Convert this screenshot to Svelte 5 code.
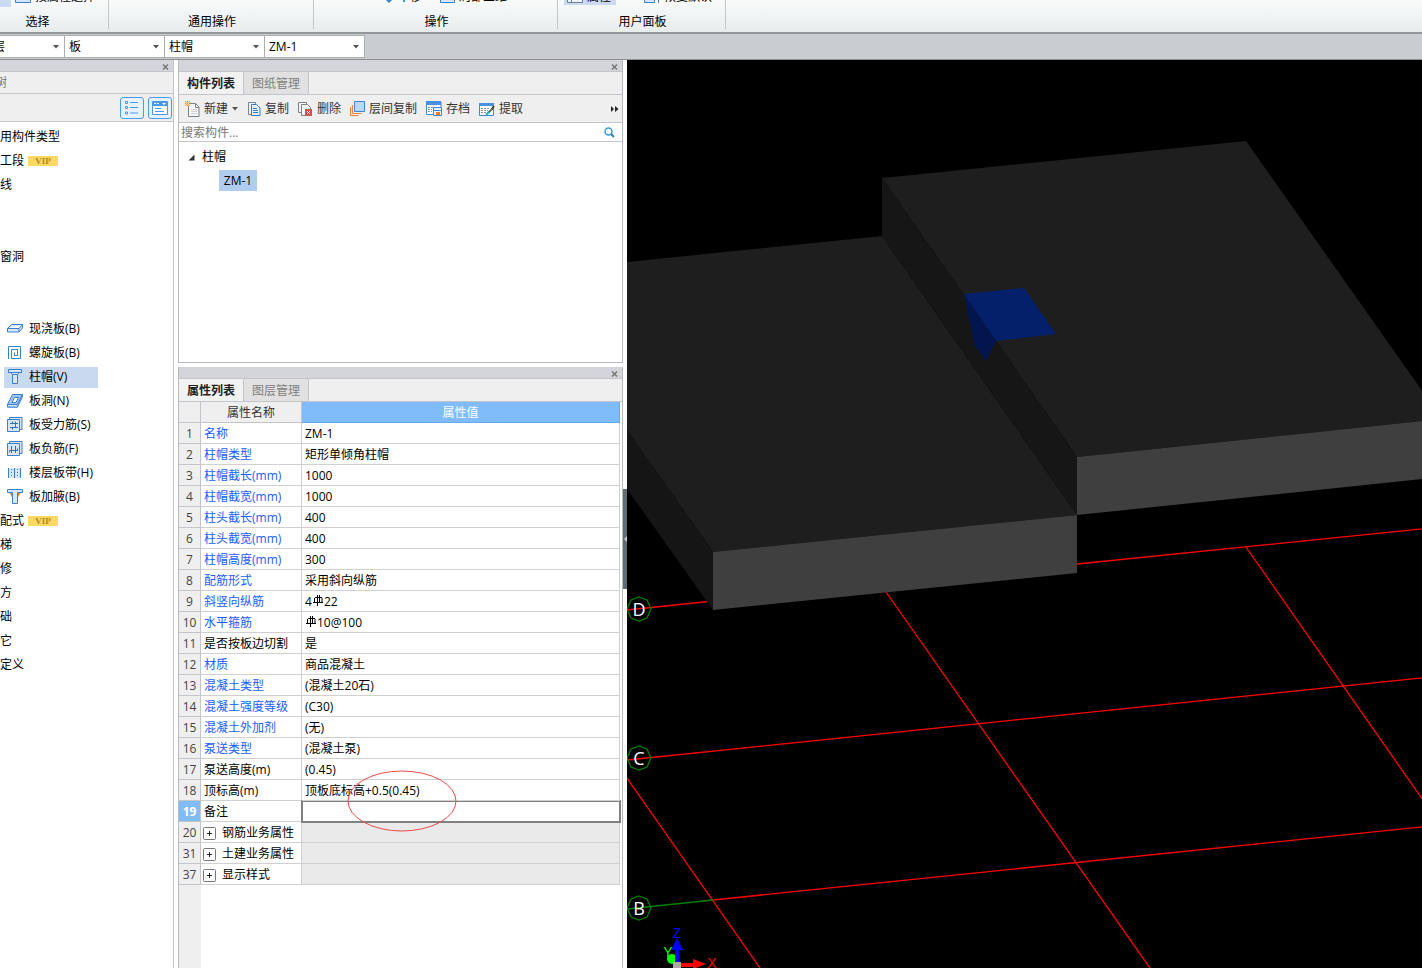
<script>
  // categories above and below the open slab group, null is a row scrolled out to the left
  const navTop = [
    { label: '用构件类型' },
    { label: '工段', vip: true },
    { label: '线' },
    null,
    null,
    { label: '窗洞' },
    null,
    null,
  ]

  const slabItems = [
    { icon: 'slab', label: '现浇板(B)' },
    { icon: 'spiral', label: '螺旋板(B)' },
    { icon: 'cap', label: '柱帽(V)' },
    { icon: 'hole', label: '板洞(N)' },
    { icon: 'rebar', label: '板受力筋(S)' },
    { icon: 'negative', label: '板负筋(F)' },
    { icon: 'strip', label: '楼层板带(H)' },
    { icon: 'haunch', label: '板加腋(B)' },
  ]

  const navBottom = [
    { label: '配式', vip: true },
    { label: '梯' },
    { label: '修' },
    { label: '方' },
    { label: '础' },
    { label: '它' },
    { label: '定义' },
  ]

  const combos = [
    { name: '楼层', value: '基础层' },
    { name: '构件大类', value: '板' },
    { name: '构件类型', value: '柱帽' },
    { name: '构件', value: 'ZM-1' },
  ]

  const properties = [
    { no: 1, name: '名称', value: 'ZM-1', link: true },
    { no: 2, name: '柱帽类型', value: '矩形单倾角柱帽', link: true },
    { no: 3, name: '柱帽截长(mm)', value: '1000', link: true },
    { no: 4, name: '柱帽截宽(mm)', value: '1000', link: true },
    { no: 5, name: '柱头截长(mm)', value: '400', link: true },
    { no: 6, name: '柱头截宽(mm)', value: '400', link: true },
    { no: 7, name: '柱帽高度(mm)', value: '300', link: true },
    { no: 8, name: '配筋形式', value: '采用斜向纵筋', link: true },
    { no: 9, name: '斜竖向纵筋', before: '4', value: '22', bar: true, link: true },
    { no: 10, name: '水平箍筋', before: '', value: '10@100', bar: true, link: true },
    { no: 11, name: '是否按板边切割', value: '是' },
    { no: 12, name: '材质', value: '商品混凝土', link: true },
    { no: 13, name: '混凝土类型', value: '(混凝土20石)', link: true },
    { no: 14, name: '混凝土强度等级', value: '(C30)', link: true },
    { no: 15, name: '混凝土外加剂', value: '(无)', link: true },
    { no: 16, name: '泵送类型', value: '(混凝土泵)', link: true },
    { no: 17, name: '泵送高度(m)', value: '(0.45)' },
    { no: 18, name: '顶标高(m)', value: '顶板底标高+0.5(0.45)', marked: true },
  ]

  const groups = [
    { no: 20, name: '钢筋业务属性' },
    { no: 31, name: '土建业务属性' },
    { no: 37, name: '显示样式' },
  ]

  const bubbles = [
    { label: 'D', y: 609 },
    { label: 'C', y: 758 },
    { label: 'B', y: 908 },
  ]

  let selected = $state('柱帽(V)')
  let remark = $state('')
  let keyword = $state('')
</script>

{#snippet closeIcon()}
  <svg width="7" height="6" viewBox="0 0 7 6"><path d="M1 .5 6 5.500M6 .5 1 5.500" stroke="#777" stroke-width="1.500" /></svg>
{/snippet}

{#snippet navRow(item)}
  <li class="nav-row">
    {#if item}{item.label}{/if}
    {#if item?.vip}<span class="vip">VIP</span>{/if}
  </li>
{/snippet}

{#snippet navIcon(name)}
  <svg width="16" height="16" viewBox="0 0 16 16" fill="#d5e6f8" stroke="#3c80cc">
    {#if name === 'slab'}
      <path d="M.5 7.500 4.500 3.500h11v3.500l-3.500 4H.5zM.5 7.500h11.500l3.500-4M12 7.500V11" />
    {:else if name === 'spiral'}
      <path d="M1.500 14V1.500h12v12h-9v-9h6v6h-3v-3" fill="none" />
    {:else if name === 'cap'}
      <path d="M1.500.5h13v3h-2l-2 2v9h-5v-9l-2-2h-2zM1.500 3.500h13M5.500 5.500h5" />
    {:else if name === 'hole'}
      <path d="M5.500 1.500h10l-5 10v2.500H.5v-2.500z" fill="#9fc3ec" />
      <path d="M.5 11.500h10v2.500H.5z" />
      <path d="M10.500 11.500l5-10v2l-5 10.500" />
      <path d="M7.500 4.500h4l-2.500 5H5z" fill="#fff" />
    {:else if name === 'rebar'}
      <path d="M2.500 3V.5h12.500v12h-2" />
      <path d="M.5 2.500h12v12H.5z" />
      <path d="M3 6.500h8M3 10.500h8M5.500 4.500v2M8.500 4.500v4M5.500 10.500v2M8.500 8.500v2" stroke="#2f6db5" />
    {:else if name === 'negative'}
      <path d="M2.500 3V.5h12.500v12h-2" />
      <path d="M.5 2.500h12v12H.5z" />
      <path d="M4.500 5v7M8.500 5v7M2.500 9.500h8M2.500 9.500v2M10.500 7.500v2" stroke="#2f6db5" />
    {:else if name === 'strip'}
      <path d="M1 3h13v10H1z" stroke="none" />
      <path d="M1.500 3v10M13.500 3v10M7.500 3v10" fill="none" />
      <path d="M4.500 4v9M10.500 4v9" stroke-dasharray="1 2" fill="none" />
    {:else}
      <path d="M2 3h12l-4 7H6z" fill="#f5821f" stroke="none" />
      <path d="M.5.5h15v3h-5v11h-5v-11h-5z" />
    {/if}
  </svg>
{/snippet}

{#snippet rebarMark()}
  <svg class="rebar-mark" width="10" height="11" viewBox="0 0 10 11" fill="none" stroke="#000">
    <path d="M4.500 0v11M6.500 0v7M2 2.500h7M0 7.500h10M1.500 3v4M9 3v4" />
  </svg>
{/snippet}

<div class="app">
  <header class="ribbon">
    <section class="group select-group">
      <div class="cut">
        <span class="active-tool"></span>
        <svg width="16" height="16" viewBox="0 0 16 16"><path d="M.5 2.500h15v13H.5z" fill="#d5e6f8" stroke="#3c80cc" /></svg>
        <span>按属性选择</span>
      </div>
      <h2>选择</h2>
    </section>
    <section class="group common-group">
      <div class="cut"></div>
      <h2>通用操作</h2>
    </section>
    <section class="group action-group">
      <div class="cut">
        <svg width="10" height="16" viewBox="0 0 10 16"><path d="M5 16 0 11h10z" fill="#3c80cc" /></svg>
        <span>平移</span>
        <svg class="view-icon" width="15" height="16" viewBox="0 0 15 16"><path d="M.5 2.500h14v13H.5z" fill="#d5e6f8" stroke="#3c80cc" /></svg>
        <span>局部三维</span>
      </div>
      <h2>操作</h2>
    </section>
    <section class="group user-group">
      <div class="cut">
        <span class="active-tool wide">
          <svg width="16" height="16" viewBox="0 0 16 16"><path d="M.5 2.500h15v13H.5zM4.500 3v12" fill="#eef3f8" stroke="#708090" /></svg>
          <span>属性</span>
        </span>
        <svg class="reset-icon" width="16" height="16" viewBox="0 0 16 16"><path d="M.5 2.500h10v13H.5zM14.500 4v12" fill="#d5e6f8" stroke="#3c80cc" /></svg>
        <span>恢复默认</span>
      </div>
      <h2>用户面板</h2>
    </section>
  </header>

  <div class="combo-bar">
    {#each combos as combo (combo.name)}
      <label class="combo">
        <select aria-label={combo.name}>
          <option>{combo.value}</option>
        </select>
        <svg width="6" height="4" viewBox="0 0 6 4"><path d="M0 0h6L3 3.500z" fill="#555" /></svg>
      </label>
    {/each}
  </div>

  <main class="workspace">
    <nav class="nav-panel">
      <div class="strip">
        <button aria-label="关闭导航树">{@render closeIcon()}</button>
      </div>
      <h3>树</h3>
      <div class="nav-tools">
        <button aria-label="列表视图">
          <svg width="14" height="14" viewBox="0 0 14 14" fill="none" stroke="#4a98e8">
            <path d="M.5.5h2v2h-2zM.5 5.500h2v2h-2zM.5 11h2v2h-2zM5 1.500h8M5 6.500h8M5 12h8" />
          </svg>
        </button>
        <button aria-label="面板视图">
          <svg width="16" height="14" viewBox="0 0 16 14">
            <path d="M.5.5h15v13H.5z" fill="#fff" stroke="#4a98e8" />
            <path d="M1 1h14v4H1z" fill="#4a98e8" />
            <path d="M2 2.500h2M5 2.500h2" stroke="#fff" />
            <path d="M10 2h4l-2 2z" fill="#fff" />
            <path d="M3 7.500h6M3 10.500h9" stroke="#4a98e8" />
          </svg>
        </button>
      </div>
      <ul class="nav-tree">
        {#each navTop as item}
          {@render navRow(item)}
        {/each}
        {#each slabItems as item (item.label)}
          <li class="nav-row">
            <button
              class="nav-item"
              class:selected={selected === item.label}
              onclick={() => (selected = item.label)}
            >
              {@render navIcon(item.icon)}
              <span>{item.label}</span>
            </button>
          </li>
        {/each}
        {#each navBottom as item}
          {@render navRow(item)}
        {/each}
      </ul>
    </nav>

    <div class="middle">
      <section class="panel">
        <div class="strip">
          <button aria-label="关闭构件列表">{@render closeIcon()}</button>
        </div>
        <div class="tabs">
          <button class="tab active">构件列表</button>
          <button class="tab">图纸管理</button>
        </div>
        <div class="tools">
          <button class="new">
            <svg width="15" height="16" viewBox="0 0 15 16">
              <path d="M3.500 2.500h7l3.500 3.500v9.500H3.500z" fill="#f7f7f7" stroke="#7d8288" />
              <path d="M10.500 2.500v4h3.500" fill="none" stroke="#7d8288" />
              <path d="M6 8.500h6M6 10.500h6M6 12.500h6" stroke="#d0d3d6" />
              <path d="M0 0h5v5H0z" fill="#f9d9a8" />
              <path d="M0 0l5 5M5 0 0 5M2.500 0v5M0 2.500h5" stroke="#f0922b" stroke-dasharray="1 1" />
            </svg>
            新建
            <svg width="6" height="4" viewBox="0 0 6 4"><path d="M0 0h6L3 3.500z" fill="#555" /></svg>
          </button>
          <button>
            <svg width="13" height="16" viewBox="0 0 13 16" fill="#eaf2fb">
              <path d="M3 13.500H.5v-12h7V4" stroke="#7d8288" />
              <path d="M3.500 3.500h5l3.500 3.500v7.500H3.500z" stroke="#2f7ad0" />
              <path d="M5 7.500h4M5 9.500h5M5 11.500h5" stroke="#2f7ad0" />
            </svg>
            复制
          </button>
          <button>
            <svg width="15" height="16" viewBox="0 0 15 16" fill="#f5f5f5">
              <path d="M3 11.500H.5v-10h8V4" stroke="#7d8288" />
              <path d="M3.500 14.500v-11h6l3 3v8z" stroke="#7d8288" />
              <path d="M7 8h7v7H7z" fill="#d94f4f" />
              <path d="M9 10l3 3M12 10l-3 3" stroke="#fff" />
            </svg>
            删除
          </button>
          <button>
            <svg width="15" height="16" viewBox="0 0 15 16" fill="none">
              <path d="M.5 6v8.500h8M2.500 4v8.500h9" stroke="#e8843a" />
              <path d="M4.500.5h10v10h-10z" fill="#b9d8fb" stroke="#3f86d8" />
            </svg>
            层间复制
          </button>
          <button>
            <svg width="16" height="16" viewBox="0 0 16 16" fill="none">
              <path d="M.5 1v12.500H15V1z" fill="#fff" stroke="#3f86d8" />
              <path d="M0 0h15v4H0z" fill="#4a90e2" />
              <path d="M2 6.500h11M2 8.500h4M2 10.500h4" stroke="#8a8f95" stroke-dasharray="2 1" />
              <path d="M7.500 6.500h8v8h-8z" fill="#eaf2fb" stroke="#3f86d8" />
              <path d="M8 9.500h7" stroke="#3f86d8" />
              <path d="M10 11h4v3h-4z" fill="#f27b1f" />
            </svg>
            存档
          </button>
          <button>
            <svg width="16" height="16" viewBox="0 0 16 16" fill="none">
              <path d="M.5 3v11.500h14V3z" fill="#fff" stroke="#3f86d8" />
              <path d="M0 2h15v3H0z" fill="#4a90e2" />
              <path d="M2 7.500h8M2 9.500h7M2 11.500h5" stroke="#8a8f95" stroke-dasharray="2 1" />
              <path d="M9 12l5-5" stroke="#666" stroke-width="2" />
              <path d="M13 8l2-3" stroke="#444" stroke-width="2" />
              <path d="M7 14l3-3" stroke="#20b4c8" stroke-width="2" />
            </svg>
            提取
          </button>
          <button class="more" aria-label="更多">
            <svg width="8" height="6" viewBox="0 0 8 6"><path d="M0 0v6l3-3zM4 0v6l3.500-3z" fill="#222" /></svg>
          </button>
        </div>
        <label class="search">
          <input type="text" placeholder="搜索构件..." aria-label="搜索构件" bind:value={keyword} />
          <svg width="11" height="11" viewBox="0 0 11 11" fill="none">
            <circle cx="4.500" cy="4.500" r="3.500" stroke="#3a9bd0" stroke-width="1.500" />
            <path d="M7 7l3 3" stroke="#2b7fb5" stroke-width="2" />
          </svg>
        </label>
        <div class="component-tree">
          <div class="tree-root">
            <svg width="7" height="7" viewBox="0 0 7 7"><path d="M6.500.5v6h-6z" fill="#333" /></svg>
            柱帽
          </div>
          <button class="tree-leaf">ZM-1</button>
        </div>
      </section>

      <section class="panel properties">
        <div class="strip">
          <button aria-label="关闭属性列表">{@render closeIcon()}</button>
        </div>
        <div class="tabs">
          <button class="tab active">属性列表</button>
          <button class="tab">图层管理</button>
        </div>
        <div class="table-wrap">
          <table>
            <thead>
              <tr>
                <th class="no"></th>
                <th class="name">属性名称</th>
                <th class="value">属性值</th>
              </tr>
            </thead>
            <tbody>
              {#each properties as row (row.no)}
                <tr>
                  <th class="no">{row.no}</th>
                  <td class:link={row.link}>{row.name}</td>
                  <td class:marked={row.marked}>
                    {#if row.bar}{row.before}{@render rebarMark()}{/if}{row.value}
                    {#if row.marked}
                      <svg class="ring" width="110" height="62" viewBox="0 0 110 62">
                        <ellipse cx="55" cy="31" rx="54" ry="30" fill="none" stroke="#f04848" />
                      </svg>
                    {/if}
                  </td>
                </tr>
              {/each}
              <tr>
                <th class="no current">19</th>
                <td><label for="remark">备注</label></td>
                <td class="editing"><input id="remark" type="text" bind:value={remark} /></td>
              </tr>
              {#each groups as group (group.no)}
                <tr>
                  <th class="no">{group.no}</th>
                  <td class="group-name">
                    <button class="expand">
                      <svg width="13" height="13" viewBox="0 0 13 13" fill="none">
                        <rect x=".5" y=".5" width="12" height="12" rx="1" stroke="#777" fill="#fff" />
                        <path d="M4 6.500h5M6.500 4v5" stroke="#222" />
                      </svg>
                      {group.name}
                    </button>
                  </td>
                  <td class="empty"></td>
                </tr>
              {/each}
            </tbody>
          </table>
        </div>
      </section>
    </div>

    <div class="splitter">
      <button aria-label="收起面板">
        <svg width="3" height="6" viewBox="0 0 3 6"><path d="M3 0v6L0 3z" fill="#c3c9ce" /></svg>
      </button>
    </div>

    <div class="viewport">
      <svg class="scene" viewBox="627 60 795 908" preserveAspectRatio="xMinYMin slice">
        <g stroke="#f00" stroke-width="1.300">
          <path d="M627 610 713 601M1077 564 1460 525" />
          <path d="M627 760 1460 674" />
          <path d="M713 900 1460 823" />
          <path d="M627 778 767 978M886 592 1157 978M1246 547 1460 853" />
        </g>
        <path d="M627 909 713 900" stroke="#008000" stroke-width="1.300" />

        <!-- upper slab -->
        <path d="M882 178 1246 141 1442 419 1077 457z" fill="#1e1e1e" />
        <path d="M1077 457 1442 419V477L1077 515z" fill="#3f3f3f" />
        <!-- lower slab -->
        <path d="M627 262 882 236 1077 515 713 552 627 430z" fill="#1e1e1e" />
        <path d="M882 178 1077 457V515L882 236z" fill="#161616" />
        <path d="M627 430 713 552V610L627 489z" fill="#151515" />
        <path d="M713 552 1077 515V573L713 610z" fill="#3f3f3f" />
        <!-- column cap -->
        <path d="M964 294 1024 288 1056 334 996 341z" fill="#04206b" />
        <path d="M964 294 996 341 986 361 974 344z" fill="#03154d" />

        {#each bubbles as bubble (bubble.label)}
          <g transform="translate(639 {bubble.y})">
            <path d="M0-12 8-9 12 0 8 9 0 12-8 9-12 0-8-9z" fill="none" stroke="#008000" stroke-width="1.300" />
            <text class="axis-label" y="7">{bubble.label}</text>
          </g>
        {/each}

        <!-- axis gizmo -->
        <circle cx="672" cy="959" r="5" fill="#0f0" />
        <path d="M675 963V950h-4l6-12 6 12h-4v13z" fill="#00f" />
        <path d="M681 963h12v-4l13 5-13 5v-2h-12z" fill="#f00" />
        <path d="M673 962h8v8h-8z" fill="#aaa" />
        <text class="gizmo" x="677" y="938" fill="#00f">Z</text>
        <text class="gizmo" x="668" y="957" fill="#0f0">Y</text>
        <text class="gizmo" x="712" y="968" fill="#f00">X</text>
      </svg>
    </div>
  </main>
</div>

<style>
  :global(body) {
    margin: 0;
    overflow: hidden;
  }

  .app {
    display: flex;
    flex-direction: column;
    height: 100vh;
    overflow: hidden;
    background: #fff;
    color: #000;
    font: 12px/16px 'Open Sans', 'Noto Sans CJK SC', sans-serif;
  }

  .app * {
    box-sizing: border-box;
  }

  button,
  input,
  select {
    margin: 0;
    padding: 0;
    border: 0;
    background: none;
    color: inherit;
    font: inherit;
  }

  svg {
    flex: none;
  }

  h2,
  h3 {
    margin: 0;
    font-size: 12px;
    font-weight: normal;
  }

  /* ribbon */
  .ribbon {
    display: flex;
    height: 34px;
    border-bottom: 2px solid #94989d;
    background: linear-gradient(#f9fbfb, #e7ecec);
  }

  .group {
    height: 29px;
    border-right: 1px solid #c3c6c9;
    text-align: center;
  }

  .select-group {
    width: 144px;
    margin-left: -35px;
  }

  .common-group {
    width: 205px;
  }

  .action-group {
    width: 244px;
  }

  .user-group {
    width: 168px;
  }

  .group h2 {
    padding-left: 2px;
    line-height: 18px;
  }

  /* last strip of the buttons that scroll out above the window */
  .cut {
    display: flex;
    align-items: flex-end;
    gap: 4px;
    height: 13px;
    padding-bottom: 10px;
    overflow: hidden;
    line-height: 12px;
  }

  .active-tool {
    display: flex;
    gap: 4px;
    align-items: flex-end;
    width: 46px;
    height: 22px;
    margin-bottom: -4px;
    background: #c9daf2;
  }

  .active-tool.wide {
    width: 52px;
    margin-bottom: -2px;
    padding: 0 3px 2px;
  }

  .action-group .cut {
    padding-left: 70px;
  }

  .user-group .cut {
    padding-left: 6px;
  }

  .view-icon {
    margin-left: 14px;
  }

  .reset-icon {
    margin-left: 24px;
  }

  /* combo bar */
  .combo-bar {
    display: flex;
    align-items: center;
    height: 26px;
    border-bottom: 1px solid #8c8f94;
    background: #c9ccd0;
  }

  .combo {
    position: relative;
    width: 100px;
    height: 23px;
    border: 1px solid #adadad;
    border-left-width: 0;
    background: #fff;
  }

  .combo:first-child {
    margin-left: -35px;
  }

  .combo select {
    width: 100%;
    height: 100%;
    padding: 1px 18px 0 4px;
    appearance: none;
  }

  .combo svg {
    position: absolute;
    top: 9px;
    right: 5px;
    pointer-events: none;
  }

  /* panels */
  .workspace {
    display: flex;
    flex: 1;
    min-height: 0;
  }

  .strip {
    display: flex;
    justify-content: flex-end;
    align-items: center;
    height: 12px;
    padding: 2px 4px 0 0;
    border-bottom: 1px solid #c3c5ca;
    background: #d4d5da;
  }

  .strip button {
    display: flex;
  }

  .nav-panel {
    flex: none;
    width: 174px;
    border-right: 1px solid #c3c5ca;
  }

  .nav-panel h3 {
    height: 22px;
    border-bottom: 1px solid #c3c5ca;
    background: #efefef;
    color: #777;
    line-height: 22px;
    text-indent: -5px;
  }

  .nav-tools {
    display: flex;
    justify-content: flex-end;
    align-items: center;
    gap: 4px;
    height: 28px;
    padding-right: 1px;
    border-bottom: 1px solid #c3c5ca;
    background: #efefef;
  }

  .nav-tools button {
    display: flex;
    align-items: center;
    justify-content: center;
    width: 24px;
    height: 22px;
    border: 1px solid #4a9cf0;
    border-radius: 3px;
    background: #e6f2ff;
  }

  .nav-tree {
    margin: 0;
    padding: 3px 0 0;
    list-style: none;
  }

  .nav-row {
    display: flex;
    align-items: center;
    gap: 4px;
    height: 24px;
  }

  .vip {
    width: 30px;
    height: 10px;
    background: #ffd862;
    color: #b08a1c;
    font: bold 9px/10px 'Liberation Serif', serif;
    text-align: center;
  }

  .nav-item {
    display: flex;
    align-items: center;
    gap: 6px;
    width: 94px;
    height: 21px;
    margin-left: 4px;
    padding-left: 3px;
    white-space: nowrap;
  }

  .nav-item.selected {
    background: #c9d9f0;
  }

  .middle {
    display: flex;
    flex: none;
    flex-direction: column;
    gap: 4px;
    width: 445px;
    margin-left: 4px;
  }

  .panel {
    border: 1px solid #b8babf;
    border-top: 0;
  }

  .tabs {
    display: flex;
    height: 23px;
    border-bottom: 1px solid #c3c5ca;
    background: #efefef;
  }

  .tab {
    width: 65px;
    height: 22px;
    padding-top: 2px;
    border-right: 1px solid #c3c5ca;
    background: #e1e1e1;
    color: #808080;
  }

  .tab.active {
    background: #f2f2f2;
    color: #222;
    font-weight: bold;
  }

  .tools {
    display: flex;
    align-items: center;
    height: 28px;
    padding: 1px 3px 0 6px;
    border-bottom: 1px solid #c3c5ca;
    background: #efefef;
    color: #333;
  }

  .tools button {
    display: flex;
    align-items: center;
    gap: 4px;
    margin-right: 9px;
    white-space: nowrap;
  }

  .tools .new {
    margin-right: 10px;
  }

  .tools .more {
    margin: 0 0 0 auto;
  }

  .search {
    display: flex;
    align-items: center;
    height: 19px;
    padding: 1px 7px 0 2px;
    border-bottom: 1px solid #c3c5ca;
  }

  .search input {
    flex: 1;
    outline: none;
  }

  .search input::placeholder {
    color: #777;
    opacity: 1;
  }

  .component-tree {
    height: 220px;
    padding-top: 3px;
  }

  .tree-root {
    display: flex;
    align-items: center;
    gap: 7px;
    height: 24px;
    padding-left: 9px;
  }

  .tree-leaf {
    width: 38px;
    height: 21px;
    margin: 1px 0 0 40px;
    background: #b0ccee;
  }

  .properties {
    display: flex;
    flex: 1;
    flex-direction: column;
    border-bottom: 0;
  }

  .table-wrap {
    flex: 1;
    padding-right: 2px;
    background: linear-gradient(90deg, #efefef 22px, #fff 22px);
  }

  table {
    width: 100%;
    border-spacing: 0;
    table-layout: fixed;
  }

  th,
  td {
    height: 21px;
    padding: 2px 3px 0;
    border-right: 1px solid #d0d0d0;
    border-bottom: 1px solid #d0d0d0;
    background: #fff;
    font-weight: normal;
    text-align: left;
    white-space: nowrap;
  }

  thead th {
    border-color: #c3c5ca;
    background: #efefef;
    color: #333;
    text-align: center;
  }

  th.no {
    width: 22px;
    padding: 2px 0 0;
    border-color: #c3c5ca;
    background: #efefef;
    color: #444;
    text-align: center;
  }

  th.no.current {
    background: #80bbfa;
    color: #fff;
    font-weight: bold;
  }

  th.name {
    width: 101px;
  }

  th.value {
    border-color: #68a8ec;
    background: #80bbfa;
    color: #fff;
  }

  td.link {
    color: #1a5cff;
  }

  td.marked {
    position: relative;
  }

  .ring {
    position: absolute;
    top: -10px;
    left: 45px;
    z-index: 1;
    pointer-events: none;
  }

  td.editing {
    outline: 2px solid #808080;
    outline-offset: -1px;
  }

  td.editing input {
    display: block;
    width: 100%;
    height: 16px;
    outline: none;
  }

  td.group-name {
    padding-left: 2px;
  }

  td.empty {
    background: #eaeaea;
  }

  .rebar-mark {
    margin: 0 1px;
  }

  .expand {
    display: flex;
    align-items: center;
    gap: 6px;
  }

  .splitter {
    flex: none;
    width: 4px;
    padding-top: 429px;
  }

  .splitter button {
    display: flex;
    align-items: center;
    justify-content: flex-end;
    width: 4px;
    height: 100px;
    background: #5f6b75;
  }

  .viewport {
    flex: 1;
    min-width: 0;
    overflow: hidden;
    background: #000;
  }

  .scene {
    display: block;
    width: 100%;
    height: 100%;
  }

  .axis-label {
    fill: #fff;
    font-size: 18px;
    text-anchor: middle;
  }

  .gizmo {
    font: 14px 'Liberation Sans', sans-serif;
    text-anchor: middle;
  }
</style>
